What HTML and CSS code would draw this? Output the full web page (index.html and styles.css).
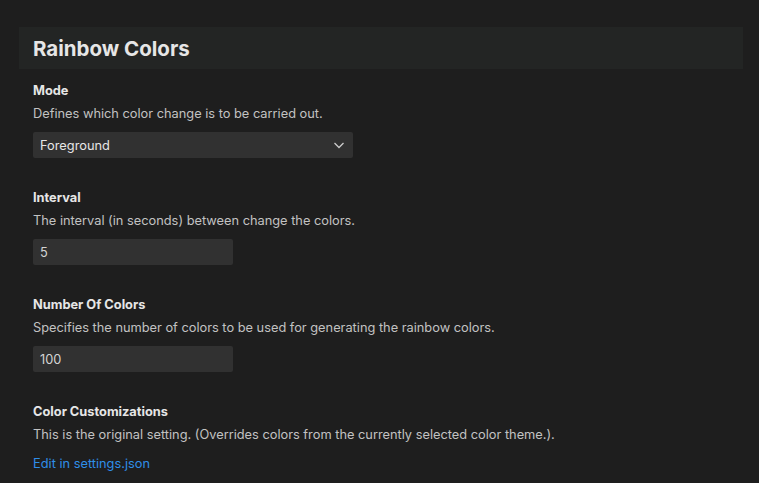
FILE: index.html
```html
<!DOCTYPE html>
<html>
<head>
<meta charset="utf-8">
<link rel="stylesheet" href="styles.css">
</head>
<body>
<div class="page">
  <div class="header"><h1 class="title">Rainbow Colors</h1></div>
  <div class="settings">
    <div class="setting">
      <div class="label">Mode</div>
      <div class="desc">Defines which color change is to be carried out.</div>
      <div class="select">
        <span>Foreground</span>
        <svg class="chev" width="16" height="16" viewBox="0 0 16 16"><path d="M3.5 6 L8 10.5 L12.5 6" fill="none" stroke="#cccccc" stroke-width="1.3"/></svg>
      </div>
    </div>
    <div class="setting">
      <div class="label">Interval</div>
      <div class="desc">The interval (in seconds) between change the colors.</div>
      <div class="input">5</div>
    </div>
    <div class="setting">
      <div class="label">Number Of Colors</div>
      <div class="desc">Specifies the number of colors to be used for generating the rainbow colors.</div>
      <div class="input">100</div>
    </div>
    <div class="setting">
      <div class="label">Color Customizations</div>
      <div class="desc">This is the original setting. (Overrides colors from the currently selected color theme.).</div>
      <a class="link" href="#">Edit in settings.json</a>
    </div>
  </div>
</div>
</body>
</html>
```

FILE: styles.css
```css
html, body {
  margin: 0;
  padding: 0;
  background: #1e1e1e;
  height: 100%;
  overflow: hidden;
}
body {
  font-family: Inter, "Noto Sans", sans-serif;
  color: #cccccc;
}
.page {
  padding: 27px 16px 0 19px;
}
.header {
  background: #232524;
  height: 42px;
  display: flex;
  align-items: center;
  padding-left: 14px;
}
.title {
  margin: 0;
  font-size: 20.5px;
  font-weight: 700;
  color: #e6e6e6;
}
.settings {
  padding: 14px 0 0 14px;
  display: flex;
  flex-direction: column;
  gap: 32px;
}
.setting {
  display: flex;
  flex-direction: column;
}
.label {
  font-size: 12.8px;
  font-weight: 700;
  color: #e6e6e6;
  line-height: 16px;
}
.desc {
  font-size: 12.8px;
  line-height: 16px;
  margin-top: 7px;
  color: #c2c2c2;
}
.select {
  margin-top: 10px;
  width: 320px;
  height: 26px;
  box-sizing: border-box;
  background: #313131;
  border-radius: 2px;
  display: flex;
  align-items: center;
  justify-content: space-between;
  padding: 0 6px 0 7px;
  font-size: 12.8px;
  color: #e6e6e6;
}
.chev { display: block; }
.input {
  margin-top: 10px;
  width: 200px;
  height: 26px;
  box-sizing: border-box;
  background: #313131;
  border-radius: 2px;
  display: flex;
  align-items: center;
  padding-left: 7px;
  font-size: 12.8px;
  color: #d4d4d4;
}
.link {
  margin-top: 13px;
  font-size: 12.8px;
  line-height: 16px;
  color: #2f8ee8;
  text-decoration: none;
}
```
